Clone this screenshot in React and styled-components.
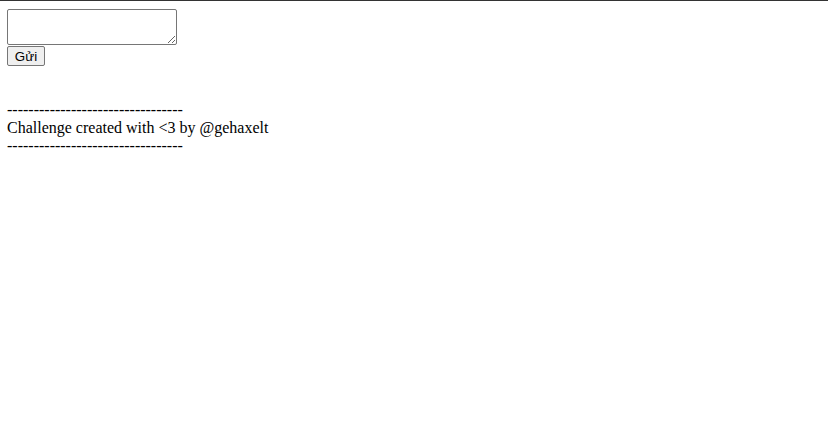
import React from "react";
import styled, { createGlobalStyle } from "styled-components";

const Global = createGlobalStyle`
  html, body {
    margin: 0;
    padding: 0;
    background: #fff;
  }
  body {
    font-family: "Liberation Serif", "Times New Roman", serif;
    font-size: 16px;
    color: #000;
  }
`;

const Page = styled.div`
  border-top: 1px solid #333;
  padding: 8px 7px;
  min-height: 430px;
`;

const Form = styled.form`
  display: flex;
  flex-direction: column;
  align-items: flex-start;
`;

const Box = styled.textarea`
  box-sizing: border-box;
  width: 170px;
  height: 36px;
  margin: 0;
  padding: 2px;
  border: 1px solid #767676;
  border-radius: 2px;
  font-family: "Liberation Mono", monospace;
  font-size: 13px;
`;

const Send = styled.button`
  box-sizing: border-box;
  height: 20px;
  width: 38px;
  margin: 1px 0 0;
  padding: 1px 6px;
  border: 1px solid #767676;
  border-radius: 2px;
  background: #efefef;
  font-family: "Liberation Sans", Arial, sans-serif;
  font-size: 13.333px;
  color: #000;
`;

const Credits = styled.div`
  margin-top: 35px;
  line-height: 18px;
`;

const Line = styled.div`
  white-space: pre;
`;

export default function App() {
  const dashes = "-".repeat(33);
  return (
    <>
      <Global />
      <Page>
        <Form onSubmit={(e) => e.preventDefault()}>
          <Box />
          <Send type="submit">Gửi</Send>
        </Form>
        <Credits>
          <Line>{dashes}</Line>
          <Line>Challenge created with &lt;3 by @gehaxelt</Line>
          <Line>{dashes}</Line>
        </Credits>
      </Page>
    </>
  );
}
